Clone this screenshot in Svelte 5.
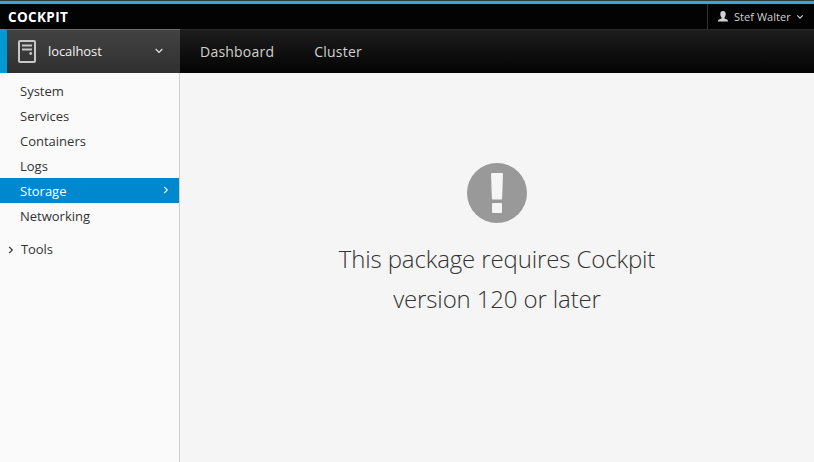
<script>
  const sections = ['System', 'Services', 'Containers', 'Logs', 'Storage', 'Networking'];
  let active = $state('Storage');
</script>

<div class="shell">
  <header class="brandbar">
    <div class="brand">COCKPIT</div>
    <button class="user">
      <svg class="person" width="10" height="11" viewBox="0 0 10 11"><path d="M5 0C3.200 0 2.300 1.200 2.300 3c0 1.500.5 2.700 1.200 3.400v1.100L1 8.500C.3 8.900 0 9.400 0 10.500h10c0-1.100-.3-1.600-1-2L6.500 7.500V6.400C7.200 5.700 7.700 4.500 7.700 3 7.700 1.200 6.800 0 5 0z" fill="#d1d1d1" /></svg>
      <span>Stef Walter</span>
      <svg class="caret" width="8" height="6" viewBox="0 0 8 6"><path d="M1.200 1.300 4 4.100l2.800-2.800" fill="none" stroke="#d1d1d1" stroke-width="1.100" /></svg>
    </button>
  </header>
  <nav class="topnav">
    <button class="host">
      <svg width="18" height="23" viewBox="0 0 18 23">
        <rect x="1" y="1" width="16" height="21" rx="1" fill="none" stroke="#c6c6c6" stroke-width="2" />
        <path d="M4 5.500h10M4 9.500h10" stroke="#c6c6c6" stroke-width="2" />
        <circle cx="12.700" cy="13.500" r="1.400" fill="#c6c6c6" />
      </svg>
      <span class="name">localhost</span>
      <svg class="down" width="8" height="6" viewBox="0 0 8 6"><path d="M.7 1 4 4.300 7.300 1" fill="none" stroke="#e6e6e6" stroke-width="1.200" /></svg>
    </button>
    <a class="tab" href="#dashboard">Dashboard</a>
    <a class="tab" href="#cluster">Cluster</a>
  </nav>
  <div class="body">
    <aside>
      <ul>
        {#each sections as name}
          <li class:active={active === name}>
            <button onclick={() => (active = name)}>{name}</button>
            {#if active === name}
              <svg width="6" height="8" viewBox="0 0 6 8"><path d="M1.200.9 4.300 4 1.200 7.100" fill="none" stroke="#fff" stroke-width="1.100" /></svg>
            {/if}
          </li>
        {/each}
      </ul>
      <button class="tools">
        <svg width="6" height="8" viewBox="0 0 6 8"><path d="M1.200.9 4.300 4 1.200 7.100" fill="none" stroke="#333" stroke-width="1.200" /></svg>
        <span>Tools</span>
      </button>
    </aside>
    <main>
      <svg width="60" height="60" viewBox="0 0 60 60">
        <circle cx="30" cy="30" r="30" fill="#999" />
        <path d="M25 10h10q1 0 1 1l-.9 24.500q0 1-1 1h-8.200q-1 0-1-1L24 11q0-1 1-1z" fill="#f5f5f5" />
        <rect x="25" y="40" width="10" height="10" rx="1" fill="#f5f5f5" />
      </svg>
      <h1>This package requires Cockpit<br />version 120 or later</h1>
    </main>
  </div>
</div>

<style>
  :global(body) { margin: 0; }
  .shell {
    height: 100vh;
    display: flex;
    flex-direction: column;
    overflow: hidden;
    background: #f5f5f5;
    font-family: "Open Sans", sans-serif;
    font-size: 13px;
    color: #333;
  }
  button {
    font: inherit;
    color: inherit;
    background: none;
    border: 0;
    padding: 0;
    margin: 0;
    text-align: left;
  }
  svg { display: block; flex: none; }
  .brandbar {
    height: 29px;
    flex: none;
    box-sizing: border-box;
    display: flex;
    justify-content: space-between;
    background: #030303;
    border-top: 1px solid #333a40;
    box-shadow: inset 0 3px #39a5dc;
    padding-top: 3px;
  }
  .brand {
    padding-left: 8px;
    line-height: 26px;
    font-weight: 700;
    font-size: 13.500px;
    letter-spacing: .35px;
    color: #fff;
  }
  .user {
    display: flex;
    align-items: center;
    width: 107px;
    box-sizing: border-box;
    border-left: 1px solid #323232;
    padding-left: 10px;
    font-size: 11px;
    color: #d1d1d1;
  }
  .user span { margin: 0 5px 0 6px; white-space: nowrap; letter-spacing: .04px; }
  .topnav {
    height: 44px;
    flex: none;
    box-sizing: border-box;
    display: flex;
    background: linear-gradient(#1d1d1d, #030303);
    border-top: 1px solid #2b2b2b;
  }
  .host {
    width: 180px;
    margin-top: -1px;
    box-sizing: border-box;
    display: flex;
    align-items: center;
    border-left: 7px solid #0099d3;
    padding: 0 17px 0 11px;
    background: linear-gradient(#434343, #303030);
    box-shadow: inset 0 1px #6a6a6a;
    color: #f1f1f1;
  }
  .name { margin-left: 12px; flex: 1; letter-spacing: -.08px; }
  .down { margin-bottom: 1px; }
  .tab {
    padding: 0 20px;
    line-height: 44px;
    font-size: 14px;
    color: #d1d1d1;
    text-decoration: none;
    letter-spacing: .22px;
  }
  .body { flex: 1; display: flex; min-height: 0; }
  aside {
    width: 180px;
    box-sizing: border-box;
    background: #fafafa;
    border-right: 1px solid #d1d1d1;
    padding-top: 5px;
  }
  ul { list-style: none; margin: 0; padding: 0; }
  li {
    height: 25px;
    display: flex;
    align-items: center;
    padding: 0 10px 0 20px;
  }
  li button { flex: 1; line-height: 23px; padding-top: 2px; }
  li svg { margin-bottom: 1px; }
  .active { background: #0088ce; color: #fff; }
  .tools { display: flex; align-items: center; margin-top: 9px; padding-left: 8px; line-height: 25px; letter-spacing: -.1px; }
  .tools span { margin-left: 7px; }
  main {
    flex: 1;
    display: flex;
    flex-direction: column;
    align-items: center;
    padding-top: 90px;
  }
  h1 {
    margin: 16px 0 0;
    font-size: 24px;
    font-weight: 300;
    line-height: 40px;
    letter-spacing: -.13px;
    text-align: center;
  }
</style>
